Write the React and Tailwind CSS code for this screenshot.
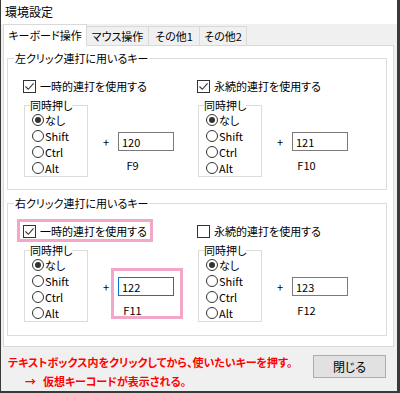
import React from 'react';

const Check = ({ checked }) => (
  <span className="w-[13px] h-[13px] border border-[#333] bg-white flex items-center justify-center shrink-0">
    {checked && (
      <svg width="11" height="11" viewBox="0 0 11 11">
        <path d="M1.5 5.5 L4.3 8.3 L9.6 2.4" fill="none" stroke="#333" strokeWidth="1.1" />
      </svg>
    )}
  </span>
);

const Radio = ({ checked, label }) => (
  <div className="h-[16px] flex items-center">
    <span className="w-[12px] h-[12px] rounded-full border border-[#333] bg-white flex items-center justify-center shrink-0">
      {checked && <span className="w-[6px] h-[6px] rounded-full bg-[#333]" />}
    </span>
    <span className="ml-[1px] leading-[14px]">{label}</span>
  </div>
);

const KeyColumn = ({ label, value, keyName, highlightCheck, highlightBox, focused }) => (
  <div className="w-[174px] flex flex-col">
    <div className="relative mt-[14px] h-[14px] flex items-center gap-[4px]">
      <Check checked={value.checked} />
      <span className="leading-[14px] whitespace-nowrap">{label}</span>
      {highlightCheck && (
        <span className="absolute -left-[6px] -top-[5px] w-[136px] h-[23px] border-[3px] border-[#f2a7c9]" />
      )}
    </div>
    <div className="mt-[5px] flex">
      <fieldset className="ml-[1px] w-[64px] border border-[#dcdcdc]">
        <legend className="ml-[5px] px-0 leading-[14px]">同時押し</legend>
        <div className="pl-[7px]">
          <Radio checked label="なし" />
          <Radio label="Shift" />
          <Radio label="Ctrl" />
          <Radio label="Alt" />
        </div>
      </fieldset>
      <div className="mt-[34px] flex items-start">
        <div className="w-[30px] h-[19px] pl-[6px] flex items-center justify-center leading-[14px]">+</div>
        <div className="relative flex flex-col">
          <div
            className={`w-[56px] h-[19px] bg-white pl-[3px] flex items-center leading-[14px] border ${
              focused ? 'border-[#0078d7]' : 'border-[#7a7a7a]'
            }`}
          >
            {value.code}
          </div>
          <div className="mt-[7px] w-[29px] text-center leading-[14px]">{keyName}</div>
          {highlightBox && (
            <span className="absolute -left-[7px] -top-[9px] w-[72px] h-[51px] border-[3px] border-[#f2a7c9]" />
          )}
        </div>
      </div>
    </div>
  </div>
);

const Group = ({ title, children, last }) => (
  <fieldset className={`ml-[3px] w-[380px] border border-[#dcdcdc] ${last ? 'mt-[6px] pb-[13px]' : 'pb-[12px]'}`}>
    <legend className="ml-[6px] px-[1px] leading-[14px]">{title}</legend>
    <div className="flex pl-[15px]">{children}</div>
  </fieldset>
);

export default function App() {
  return (
    <div className="w-[400px] h-[393px] flex flex-col bg-[#f0f0f0] border-l border-r-[3px] border-b-2 border-[#3a3a3a] text-[11px] text-black font-['Noto_Sans_CJK_JP',sans-serif] [font-feature-settings:'palt']">
      <div className="h-[24px] bg-white pl-[4px] flex items-center text-[12px]">環境設定</div>

      <div className="h-[21px] flex items-end">
        <div className="relative z-10 ml-[2px] -mb-[1px] w-[84px] h-[22px] bg-white border-l border-t border-r border-[#d9d9d9] flex items-center justify-center">
          キーボード操作
        </div>
        <div className="w-[62px] h-[19px] border-t border-r border-[#d9d9d9] flex items-center justify-center">マウス操作</div>
        <div className="w-[51px] h-[19px] border-t border-r border-[#d9d9d9] flex items-center justify-center">その他1</div>
        <div className="w-[47px] h-[19px] border-t border-r border-[#d9d9d9] flex items-center justify-center">その他2</div>
      </div>

      <div className="ml-[2px] w-[391px] h-[302px] bg-white border border-[#d9d9d9] pt-[5px]">
        <Group title="左クリック連打に用いるキー">
          <KeyColumn label="一時的連打を使用する" value={{ checked: true, code: '120' }} keyName="F9" />
          <KeyColumn label="永続的連打を使用する" value={{ checked: true, code: '121' }} keyName="F10" />
        </Group>
        <Group title="右クリック連打に用いるキー" last>
          <KeyColumn
            label="一時的連打を使用する"
            value={{ checked: true, code: '122' }}
            keyName="F11"
            highlightCheck
            highlightBox
            focused
          />
          <KeyColumn label="永続的連打を使用する" value={{ checked: false, code: '123' }} keyName="F12" />
        </Group>
      </div>

      <div className="flex-1 flex">
        <div className="flex-1 pl-[7px] pt-[6px] text-[#ff0000] font-bold leading-[19px]">
          <div className="whitespace-nowrap">テキストボックス内をクリックしてから、使いたいキーを押す。</div>
          <div className="pl-[17px] flex whitespace-nowrap">
            <span>→</span>
            <span className="ml-[7px]">仮想キーコードが表示される。</span>
          </div>
        </div>
        <button className="mt-[8px] mr-[11px] w-[73px] h-[23px] bg-[#e1e1e1] border border-[#adadad] text-[12px] leading-[14px]">
          閉じる
        </button>
      </div>
    </div>
  );
}
